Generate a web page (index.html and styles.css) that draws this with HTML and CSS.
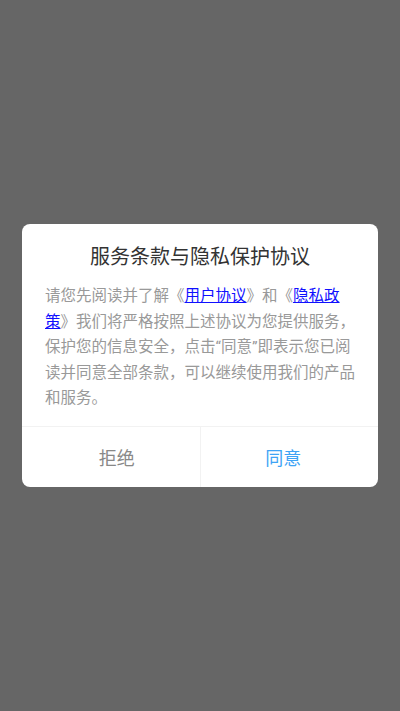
FILE: index.html
```html
<!DOCTYPE html>
<html lang="zh-CN">
<head>
<meta charset="utf-8">
<meta name="viewport" content="width=device-width, initial-scale=1">
<title>服务条款与隐私保护协议</title>
<link rel="stylesheet" href="styles.css">
</head>
<body>
<div class="overlay">
  <div class="dialog">
    <h1 class="dialog-title">服务条款与隐私保护协议</h1>
    <p class="dialog-body">请您先阅读并了解《<a href="#" class="link">用户协议</a>》和《<a href="#" class="link">隐私政策</a>》我们将严格按照上述协议为您提供服务，保护您的信息安全，点击“同意”即表示您已阅读并同意全部条款，可以继续使用我们的产品和服务。</p>
    <div class="dialog-actions">
      <button class="btn btn-reject">拒绝</button>
      <button class="btn btn-agree">同意</button>
    </div>
  </div>
</div>
</body>
</html>
```

FILE: styles.css
```css
html, body {
  margin: 0;
  padding: 0;
}
body {
  background: #666666;
  font-family: Roboto, "Noto Sans CJK SC", sans-serif;
}
.overlay {
  height: 100vh;
  display: flex;
  align-items: center;
  justify-content: center;
}
.dialog {
  width: 356px;
  background: #ffffff;
  border-radius: 8px;
  overflow: hidden;
}
.dialog-title {
  margin: 0;
  padding-top: 19px;
  font-size: 20px;
  line-height: 28px;
  font-weight: normal;
  color: #333333;
  text-align: center;
}
.dialog-body {
  margin: 0;
  padding: 13px 21px 14px 23px;
  font-size: 15.5px;
  line-height: 25.6px;
  color: #999999;
}
.link {
  color: #1010ff;
  text-decoration: underline;
}
.dialog-actions {
  display: flex;
  height: 60px;
  padding: 0 12px;
  border-top: 1px solid #f2f2f2;
}
.btn {
  flex: 1;
  border: none;
  background: none;
  padding: 0;
  font-family: inherit;
  font-size: 18px;
  cursor: pointer;
}
.btn-reject {
  color: #888888;
  border-right: 1px solid #f2f2f2;
}
.btn-agree {
  color: #3ea3f5;
}
```
